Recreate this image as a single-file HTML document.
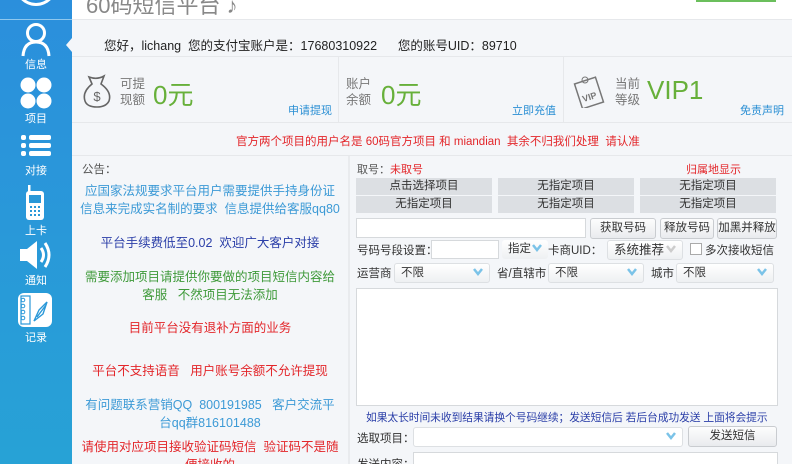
<!DOCTYPE html>
<html><head><meta charset="utf-8"><style>
*{margin:0;padding:0;box-sizing:border-box}
html{width:792px;height:464px;overflow:hidden}
body{width:792px;height:464px;overflow:hidden;background:#f4f6f9;font-family:"Liberation Sans","Noto Sans CJK SC",sans-serif;font-size:12px;color:#333;position:relative}
.a{position:absolute}
#side{left:0;top:0;width:72px;height:464px;background:linear-gradient(#2b8fdc,#27a2d6)}
.lbl{position:absolute;width:72px;text-align:center;color:#fff;font-size:11px}
.g{background:#dcdfe3;color:#333;text-align:center;line-height:17px;font-size:11.5px}
.btn{background:linear-gradient(#fdfdfd,#e9ebee);border:1px solid #c9ccd0;border-radius:3px;text-align:center;line-height:19px;font-size:11.5px}
.inp{background:#fff;border:1px solid #d6d9dc}
.sel{background:linear-gradient(#fff,#eef0f2);border:1px solid #dde0e3;border-radius:3px;font-size:11.5px;line-height:18px;padding-left:6px}
.chev{position:absolute;right:6px;top:4px;width:10px;height:8px}
.ann{position:absolute;left:72px;width:276px;text-align:center;font-size:12.5px;line-height:18px;white-space:nowrap}
</style></head><body>
<div class="a" style="left:72px;top:0;width:720px;height:20px;background:#fff"></div>
<div class="a" style="left:86px;top:-12px;font-size:22px;color:#888">60码短信平台 ♪</div>
<div class="a" style="left:696px;top:0;width:80px;height:2px;background:#6bbf5c"></div>
<div class="a" style="left:72px;top:19px;width:720px;height:1px;background:#e6e8eb"></div>
<div class="a" style="left:104px;top:35px;font-size:12.5px;color:#222">您好，lichang&nbsp; 您的支付宝账户是：17680310922&nbsp;&nbsp;&nbsp;&nbsp;&nbsp; 您的账号UID：89710</div>
<div class="a" style="left:72px;top:56px;width:720px;height:1px;background:#e6e8eb"></div>
<div class="a" style="left:338px;top:57px;width:1px;height:65px;background:#e6e8eb"></div>
<div class="a" style="left:563px;top:57px;width:1px;height:65px;background:#e6e8eb"></div>
<div class="a" style="left:72px;top:122px;width:720px;height:1px;background:#e6e8eb"></div>
<svg class="a" style="left:82px;top:74px" width="30" height="34" viewBox="0 0 30 34"><path d="M10 10 L7 3 Q15 6 22 2 L19 10 Q30 18 27 27 Q24 33 15 33 Q5 33 3 27 Q0 18 10 10Z" fill="none" stroke="#666" stroke-width="1.6"/><text x="15" y="27" font-size="13" text-anchor="middle" fill="#666" font-family="Liberation Sans">$</text></svg>
<div class="a" style="left:120px;top:76px;font-size:12.5px;color:#777;line-height:16px">可提<br>现额</div>
<div class="a" style="left:153px;top:75px;font-size:26px;color:#67b03a">0元</div>
<div class="a" style="left:288px;top:102px;font-size:11px;color:#2a8fd4">申请提现</div>
<div class="a" style="left:346px;top:76px;font-size:12.5px;color:#777;line-height:16px">账户<br>余额</div>
<div class="a" style="left:381px;top:75px;font-size:26px;color:#67b03a">0元</div>
<div class="a" style="left:512px;top:102px;font-size:11px;color:#2a8fd4">立即充值</div>
<svg class="a" style="left:572px;top:72px" width="36" height="36" viewBox="0 0 36 36"><rect x="6" y="8" width="22" height="26" transform="rotate(-18 17 21)" fill="#f4f6f9" stroke="#777" stroke-width="1.5"/><circle cx="13" cy="8" r="3" fill="none" stroke="#777"/><text x="9" y="28" font-size="9" fill="#777" transform="rotate(-18 17 21)" font-family="Liberation Sans" font-weight="bold">VIP</text></svg>
<div class="a" style="left:615px;top:76px;font-size:12.5px;color:#777;line-height:16px">当前<br>等级</div>
<div class="a" style="left:647px;top:75px;font-size:26px;color:#67b03a">VIP1</div>
<div class="a" style="left:740px;top:102px;font-size:11px;color:#2a8fd4">免责声明</div>
<div class="a" style="left:236px;top:133px;font-size:11.5px;color:#e3262a">官方两个项目的用户名是 60码官方项目 和 miandian&nbsp; 其余不归我们处理&nbsp; 请认准</div>
<div class="a" style="left:72px;top:155px;width:720px;height:1px;background:#e6e8eb"></div>
<div class="a" style="left:348px;top:156px;width:2px;height:308px;background:#e9ebee"></div>
<div class="a" style="left:82px;top:161px;font-size:11.5px;color:#555">公告：</div>
<div class="ann" style="top:182px;color:#3c9ad6">应国家法规要求平台用户需要提供手持身份证<br>信息来完成实名制的要求&nbsp; 信息提供给客服qq80</div>
<div class="ann" style="top:234px;color:#2a3ea8">平台手续费低至0.02&nbsp; 欢迎广大客户对接</div>
<div class="ann" style="top:268px;color:#3f9a3a">需要添加项目请提供你要做的项目短信内容给<br>客服&nbsp;&nbsp; 不然项目无法添加</div>
<div class="ann" style="top:319px;color:#e3262a">目前平台没有退补方面的业务</div>
<div class="ann" style="top:362px;color:#e3262a">平台不支持语音&nbsp;&nbsp; 用户账号余额不允许提现</div>
<div class="ann" style="top:396px;color:#3c9ad6">有问题联系营销QQ&nbsp; 800191985&nbsp;&nbsp; 客户交流平<br>台qq群816101488</div>
<div class="ann" style="top:438px;color:#e3262a">请使用对应项目接收验证码短信&nbsp; 验证码不是随<br>便接收的</div>
<div class="a" style="left:357px;top:161px;font-size:11px;color:#555">取号：<span style="color:#e3262a">未取号</span></div>
<div class="a" style="left:686px;top:161px;font-size:11px;color:#e3262a">归属地显示</div>
<div class="a g" style="left:356px;top:178px;width:136px">点击选择项目</div>
<div class="a g" style="left:498px;top:178px;width:136px">无指定项目</div>
<div class="a g" style="left:640px;top:178px;width:136px">无指定项目</div>
<div class="a g" style="left:356px;top:196px;width:136px">无指定项目</div>
<div class="a g" style="left:498px;top:196px;width:136px">无指定项目</div>
<div class="a g" style="left:640px;top:196px;width:136px">无指定项目</div>
<div class="a inp" style="left:356px;top:218px;width:230px;height:20px"></div>
<div class="a btn" style="left:590px;top:218px;width:66px;height:21px">获取号码</div>
<div class="a btn" style="left:660px;top:218px;width:54px;height:21px">释放号码</div>
<div class="a btn" style="left:717px;top:218px;width:60px;height:21px">加黑并释放</div>
<div class="a" style="left:357px;top:242px;font-size:11.5px">号码号段设置：</div>
<div class="a inp" style="left:431px;top:240px;width:68px;height:19px"></div>
<div class="a sel" style="left:502px;top:240px;width:46px;height:19px;border:none">指定<svg class="chev" viewBox="0 0 10 8"><path d="M1 1L5 6L9 1" stroke="#7bc3e8" stroke-width="2.5" fill="none"/></svg></div>
<div class="a" style="left:548px;top:242px;font-size:11.5px">卡商UID：</div>
<div class="a sel" style="left:607px;top:240px;width:76px;height:20px;font-size:12.5px">系统推荐<svg class="chev" viewBox="0 0 10 8"><path d="M1 1L5 6L9 1" stroke="#ccc" stroke-width="2.5" fill="none"/></svg></div>
<div class="a" style="left:690px;top:243px;width:12px;height:12px;border:1px solid #aaa;background:#fff"></div>
<div class="a" style="left:705px;top:242px;font-size:11.5px">多次接收短信</div>
<div class="a" style="left:357px;top:265px;font-size:11.5px">运营商</div>
<div class="a sel" style="left:394px;top:263px;width:96px;height:20px">不限<svg class="chev" viewBox="0 0 10 8"><path d="M1 1L5 6L9 1" stroke="#7bc3e8" stroke-width="2.5" fill="none"/></svg></div>
<div class="a" style="left:497px;top:265px;font-size:11.5px">省/直辖市</div>
<div class="a sel" style="left:548px;top:263px;width:96px;height:20px">不限<svg class="chev" viewBox="0 0 10 8"><path d="M1 1L5 6L9 1" stroke="#7bc3e8" stroke-width="2.5" fill="none"/></svg></div>
<div class="a" style="left:651px;top:265px;font-size:11.5px">城市</div>
<div class="a sel" style="left:676px;top:263px;width:98px;height:20px">不限<svg class="chev" viewBox="0 0 10 8"><path d="M1 1L5 6L9 1" stroke="#7bc3e8" stroke-width="2.5" fill="none"/></svg></div>
<div class="a inp" style="left:356px;top:288px;width:422px;height:118px"></div>
<div class="a" style="left:366px;top:409px;font-size:10.8px;color:#2a3ea8;white-space:nowrap;letter-spacing:-0.1px">如果太长时间未收到结果请换个号码继续；发送短信后 若后台成功发送 上面将会提示</div>
<div class="a" style="left:357px;top:430px;font-size:11.5px">选取项目：</div>
<div class="a sel" style="left:413px;top:427px;width:270px;height:20px;background:#fff"><svg class="chev" viewBox="0 0 10 8"><path d="M1 1L5 6L9 1" stroke="#7bc3e8" stroke-width="2.5" fill="none"/></svg></div>
<div class="a btn" style="left:688px;top:426px;width:89px;height:21px">发送短信</div>
<div class="a" style="left:357px;top:456px;font-size:11.5px">发送内容：</div>
<div class="a inp" style="left:413px;top:452px;width:365px;height:20px"></div>

<div id="side" class="a">
<div class="a" style="left:14px;top:-40px;width:44px;height:46px;border:3px solid #fff;border-radius:50%"></div>
<div class="a" style="left:0;top:19px;width:72px;height:1px;background:#8fc8ee"></div>
<svg class="a" style="left:21px;top:22px" width="30" height="35" viewBox="0 0 30 35"><circle cx="15" cy="11" r="8.5" fill="none" stroke="#fff" stroke-width="3"/><path d="M2 34 Q3 20 15 20 Q27 20 28 34" fill="none" stroke="#fff" stroke-width="3"/></svg>
<div class="lbl" style="top:56px">信息</div>
<svg class="a" style="left:66px;top:38px" width="6" height="14"><path d="M6 0L0 7L6 14Z" fill="#f4f6f9"/></svg>
<svg class="a" style="left:20px;top:77px" width="32" height="32"><circle cx="8" cy="8" r="7.5" fill="#fff"/><circle cx="24" cy="8" r="7.5" fill="#fff"/><circle cx="8" cy="24" r="7.5" fill="#fff"/><circle cx="24" cy="24" r="7.5" fill="#fff"/></svg>
<div class="lbl" style="top:110px">项目</div>
<svg class="a" style="left:21px;top:134px" width="30" height="24"><rect x="0" y="1" width="5" height="5" rx="2" fill="#fff"/><rect x="8" y="1" width="22" height="5" rx="2" fill="#fff"/><rect x="0" y="9" width="5" height="5" rx="2" fill="#fff"/><rect x="8" y="9" width="22" height="5" rx="2" fill="#fff"/><rect x="0" y="17" width="5" height="5" rx="2" fill="#fff"/><rect x="8" y="17" width="22" height="5" rx="2" fill="#fff"/></svg>
<div class="lbl" style="top:162px">对接</div>
<svg class="a" style="left:25px;top:185px" width="20" height="36"><rect x="3" y="0" width="2.5" height="7" fill="#fff"/><rect x="1" y="6" width="18" height="29" rx="3" fill="#fff"/><rect x="4" y="10" width="12" height="8" fill="#2a98d8"/><g fill="#2a98d8"><rect x="5" y="21" width="2" height="2"/><rect x="9" y="21" width="2" height="2"/><rect x="13" y="21" width="2" height="2"/><rect x="5" y="25" width="2" height="2"/><rect x="9" y="25" width="2" height="2"/><rect x="13" y="25" width="2" height="2"/><rect x="5" y="29" width="2" height="2"/><rect x="9" y="29" width="2" height="2"/><rect x="13" y="29" width="2" height="2"/></g></svg>
<div class="lbl" style="top:222px">上卡</div>
<svg class="a" style="left:19px;top:240px" width="34" height="30"><path d="M1 9H8L18 1V29L8 21H1Z" fill="#fff"/><path d="M22 8Q27 15 22 22" stroke="#fff" stroke-width="3" fill="none"/><path d="M26 3Q34 15 26 27" stroke="#fff" stroke-width="3" fill="none"/></svg>
<div class="lbl" style="top:272px">通知</div>
<svg class="a" style="left:17px;top:292px" width="36" height="36"><rect x="1" y="1" width="34" height="34" rx="6" fill="#fff"/><rect x="4" y="4" width="9" height="28" fill="none" stroke="#2a98d8" stroke-width="1.2"/><g fill="none" stroke="#2a98d8"><circle cx="6" cy="8" r="1.8"/><circle cx="6" cy="14" r="1.8"/><circle cx="6" cy="20" r="1.8"/><circle cx="6" cy="26" r="1.8"/></g><path d="M17 29L22 18L30 10L26 22Z M20 25L29 13" fill="none" stroke="#2a98d8" stroke-width="1.4"/></svg>
<div class="lbl" style="top:329px">记录</div>
</div>
</body></html>
